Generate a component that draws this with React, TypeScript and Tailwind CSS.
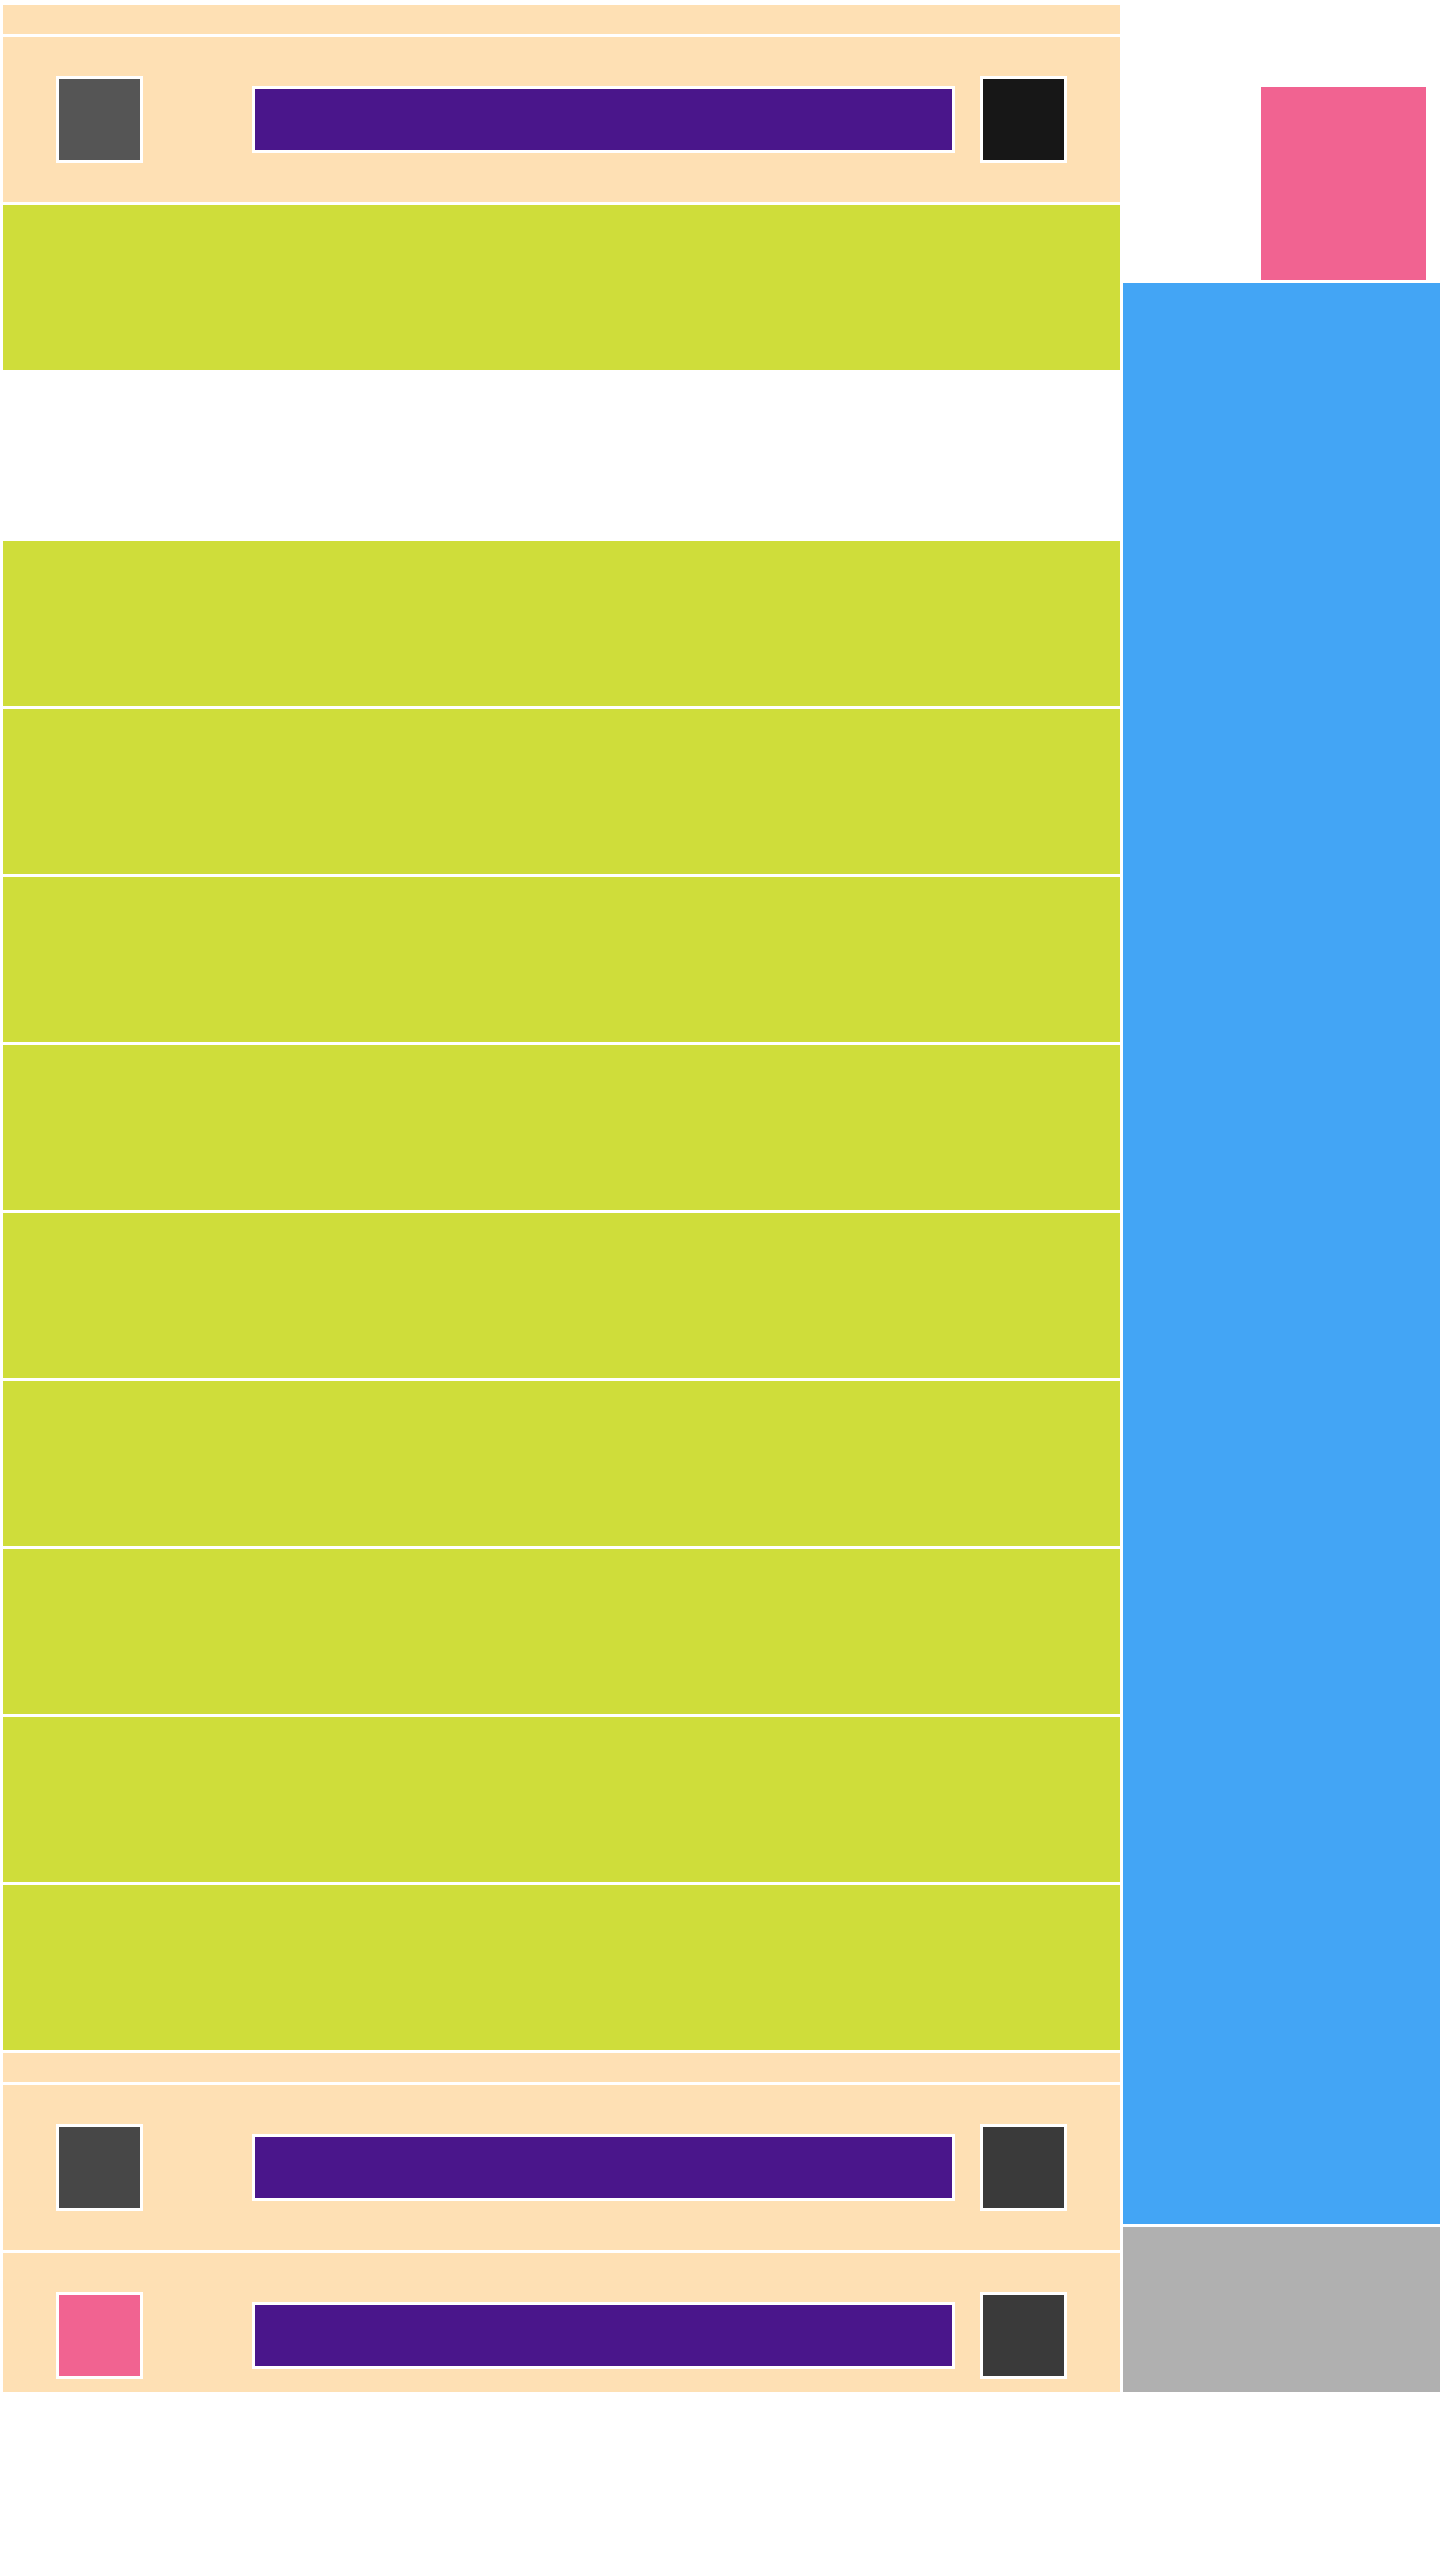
import React from 'react';

function Strip() {
  return <div className="h-[29px] shrink-0 bg-[#fee0b4]" />;
}

function Block({ color }: { color: string }) {
  return <div className={`h-[165px] shrink-0 ${color}`} />;
}

function ToolRow({ left, right }: { left: string; right: string }) {
  return (
    <div className="flex h-[165px] shrink-0 items-center bg-[#fee0b4] px-[53px]">
      <div className={`h-[87px] w-[87px] border-[3px] border-white ${left}`} />
      <div className="ml-[109px] h-[67px] w-[703px] border-[3px] border-white bg-[#4a168b]" />
      <div className={`ml-[25px] h-[87px] w-[87px] border-[3px] border-white ${right}`} />
    </div>
  );
}

export default function App() {
  return (
    <div className="flex h-[2392px] gap-[3px] overflow-hidden bg-white pl-[3px]">
      <div className="flex w-[1117px] shrink-0 flex-col gap-[3px] pt-[5px]">
        <Strip />
        <ToolRow left="bg-[#555555]" right="bg-[#171717]" />
        <Block color="bg-[#cfdd3a]" />
        <Block color="bg-white" />
        <Block color="bg-[#cfdd3a]" />
        <Block color="bg-[#cfdd3a]" />
        <Block color="bg-[#cfdd3a]" />
        <Block color="bg-[#cfdd3a]" />
        <Block color="bg-[#cfdd3a]" />
        <Block color="bg-[#cfdd3a]" />
        <Block color="bg-[#cfdd3a]" />
        <Block color="bg-[#cfdd3a]" />
        <Block color="bg-[#cfdd3a]" />
        <Strip />
        <ToolRow left="bg-[#474747]" right="bg-[#3a3a3a]" />
        <ToolRow left="bg-[#f16391]" right="bg-[#3a3a3a]" />
      </div>
      <div className="flex flex-1 flex-col gap-[3px]">
        <div className="mr-[14px] mt-[87px] h-[193px] w-[165px] self-end bg-[#f16391]" />
        <div className="h-[1941px] shrink-0 bg-[#43a5f5]" />
        <div className="h-[165px] shrink-0 bg-[#b0b0b0]" />
      </div>
    </div>
  );
}
